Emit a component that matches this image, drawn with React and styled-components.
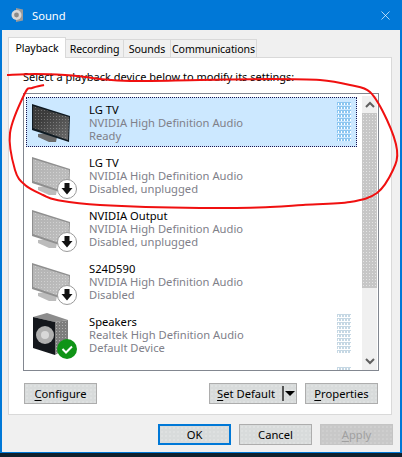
import styled, { createGlobalStyle } from "styled-components"
import { X } from "lucide-react"

const devices = [
  { id: 1, name: "LG TV", driver: "NVIDIA High Definition Audio", status: "Ready", icon: "tv", selected: true, meter: true },
  { id: 2, name: "LG TV", driver: "NVIDIA High Definition Audio", status: "Disabled, unplugged", icon: "off" },
  { id: 3, name: "NVIDIA Output", driver: "NVIDIA High Definition Audio", status: "Disabled, unplugged", icon: "off" },
  { id: 4, name: "S24D590", driver: "NVIDIA High Definition Audio", status: "Disabled", icon: "off" },
  { id: 5, name: "Speakers", driver: "Realtek High Definition Audio", status: "Default Device", icon: "speaker", meter: true },
]

// the hand drawn red line, point by point
const scribble = [
  [7, 75], [35, 74], [65, 75], [85, 77], [100, 79], [130, 81], [200, 80], [270, 79], [320, 80], [350, 85],
  [370, 92], [387, 120], [397, 150], [393, 170], [377, 193], [350, 202], [303, 205], [270, 207], [200, 208],
  [100, 205], [57, 200], [43, 195], [25, 185], [15, 170], [10, 133], [25, 93], [32, 88], [44, 85],
]

const smoothPath = (pts) => {
  let d = `M${pts[0][0]} ${pts[0][1]}`
  for (let i = 0; i < pts.length - 1; i++) {
    const p0 = pts[i - 1] || pts[i]
    const p1 = pts[i]
    const p2 = pts[i + 1]
    const p3 = pts[i + 2] || p2
    const c1 = [p1[0] + (p2[0] - p0[0]) / 6, p1[1] + (p2[1] - p0[1]) / 6]
    const c2 = [p2[0] - (p3[0] - p1[0]) / 6, p2[1] - (p3[1] - p1[1]) / 6]
    d += `C${c1[0]} ${c1[1]} ${c2[0]} ${c2[1]} ${p2[0]} ${p2[1]}`
  }
  return d
}

const GlobalStyle = createGlobalStyle`
  html, body {
    margin: 0;
    padding: 0;
    background: #10202c;
  }
  body {
    font-family: "Noto Sans", "Open Sans", sans-serif;
    font-size: 12px;
    color: #000;
    overflow: hidden;
  }
`

const Frame = styled.div`
  position: relative;
  width: 402px;
  height: 457px;
  overflow: hidden;
`

const Window = styled.div`
  width: 402px;
  height: 453px;
  box-sizing: border-box;
  background: #f0f0f0;
  border-left: 2px solid #0078d7;
  border-right: 2px solid #0078d7;
  border-bottom: 1px solid #0078d7;
  display: flex;
  flex-direction: column;
`

const TitleBar = styled.div`
  height: 30px;
  flex: none;
  background: #0078d7;
  color: #fff;
  display: flex;
  align-items: center;
  padding: 0 7px 0 9px;
  gap: 7px;
  svg.close {
    margin-left: auto;
  }
`

const Title = styled.span`
  font-size: 11.2px;
`

const Body = styled.div`
  flex: 1;
  display: flex;
  flex-direction: column;
  padding: 7px 8px 0 6px;
`

const Tabs = styled.div`
  display: flex;
  align-items: flex-end;
  height: 21px;
  position: relative;
  z-index: 1;
`

const Tab = styled.div`
  box-sizing: border-box;
  width: ${(p) => p.$width}px;
  height: ${(p) => (p.$active ? 21 : 19)}px;
  background: ${(p) => (p.$active ? "#fff" : "#f0f0f0")};
  border: 1px solid #d9d9d9;
  border-bottom: ${(p) => (p.$active ? "none" : "1px solid #d9d9d9")};
  border-left: ${(p) => (p.$active || p.$first ? "1px solid #d9d9d9" : "none")};
  display: flex;
  align-items: center;
  justify-content: center;
  font-size: 10.6px;
  letter-spacing: -0.1px;
  line-height: 16px;
  white-space: nowrap;
`

const Panel = styled.div`
  box-sizing: border-box;
  width: 384px;
  height: 358px;
  margin-top: -1px;
  background: #fff;
  border: 1px solid #d9d9d9;
  padding: 11px 12px 0 14px;
  display: flex;
  flex-direction: column;
`

const Hint = styled.div`
  height: 24px;
  line-height: 16px;
  font-size: 11px;
  white-space: nowrap;
`

const ListBox = styled.div`
  box-sizing: border-box;
  width: 356px;
  height: 278px;
  border: 1px solid #828790;
  display: flex;
  gap: 5px;
  padding: 2px 1px 0 2px;
  overflow: hidden;
`

const Rows = styled.div`
  width: 331px;
  flex: none;
  display: flex;
  flex-direction: column;
  gap: 3px;
  padding-top: 1px;
`

const Row = styled.div`
  box-sizing: border-box;
  flex: none;
  position: relative;
  height: 50px;
  display: flex;
  padding: 7px 6px 0 6px;
  background: ${(p) => (p.$selected ? "#cce8ff" : "transparent")};
  outline: ${(p) => (p.$selected ? "1px dotted #1c1450" : "none")};
  outline-offset: -1px;
`

const IconSlot = styled.div`
  width: 57px;
  flex: none;
  svg {
    display: block;
    overflow: visible;
  }
`

const Info = styled.div`
  flex: 1;
  display: flex;
  flex-direction: column;
  margin-top: -1px;
  font-size: 11.2px;
  line-height: 13px;
  white-space: nowrap;
`

const Name = styled.div`
  color: #000;
`

const Detail = styled.div`
  color: #808089;
`

const Meter = styled.div`
  width: 14px;
  height: 39px;
  flex: none;
  margin-top: -2px;
  background:
    radial-gradient(circle, #fff 0.5px, transparent 0.8px) 0 0 / 3px 4px,
    repeating-linear-gradient(
      to bottom,
      ${(p) => (p.$selected ? "#8cc6f0" : "#c6d8e4")} 0 3px,
      ${(p) => (p.$selected ? "#cce8ff" : "#fff")} 3px 4px
    );
`

const ScrollBar = styled.div`
  width: 15px;
  flex: none;
  height: 274px;
  display: flex;
  flex-direction: column;
  background: #f0f0f0;
`

const ScrollButton = styled.div`
  height: 17px;
  flex: none;
  display: flex;
  align-items: center;
  justify-content: center;
  color: #606060;
`

const Thumb = styled.div`
  height: 175px;
  background: radial-gradient(circle, #e4e4e4 0.5px, transparent 0.8px) 0 0 / 3px 3px, #c6c6c6;
`

const ScrollSpace = styled.div`
  flex: 1;
`

const ActionRow = styled.div`
  display: flex;
  align-items: center;
  margin-top: 12px;
  height: 21px;
  padding-left: 1px;
`

const Button = styled.button`
  box-sizing: border-box;
  width: ${(p) => p.$width || 73}px;
  height: 21px;
  flex: none;
  padding: 0;
  font-family: inherit;
  font-size: 11.2px;
  line-height: 16px;
  color: ${(p) => (p.$disabled ? "#a0a0a0" : "#000")};
  border: ${(p) => (p.$primary ? "2px solid #0078d7" : p.$disabled ? "1px solid #c4c4c4" : "1px solid #adadad")};
  background:
    radial-gradient(circle, ${(p) => (p.$disabled ? "#dcdcdc" : "#eceeee")} 0.5px, transparent 0.8px) 0 0 / 4px 4px,
    ${(p) => (p.$disabled ? "#c8c8c8" : "#d8dbdb")};
  display: flex;
  align-items: center;
  justify-content: center;
  u {
    text-underline-offset: 2px;
  }
`

const SplitLabel = styled.span`
  flex: 1;
`

const SplitArrow = styled.span`
  width: 14px;
  height: 15px;
  flex: none;
  box-sizing: border-box;
  border-left: 2px solid #555;
  display: flex;
  align-items: center;
  justify-content: center;
  &::after {
    content: "";
    border-left: 5px solid transparent;
    border-right: 5px solid transparent;
    border-top: 5px solid #000;
  }
`

const Spacer = styled.div`
  width: ${(p) => p.$width}px;
  flex: none;
`

const Footer = styled.div`
  display: flex;
  justify-content: flex-end;
  gap: 8px;
  margin-top: 9px;
  margin-right: -1px;
`

const Annotation = styled.svg`
  position: absolute;
  left: 0;
  top: 0;
  pointer-events: none;
`

const Dither = ({ id, dot, base }) => (
  <pattern id={id} width="3" height="3" patternUnits="userSpaceOnUse">
    <rect width="3" height="3" fill={base} />
    <rect width="1" height="1" fill={dot} />
  </pattern>
)

const Badge = ({ x, y }) => (
  <g>
    <circle cx={x} cy={y} r="9.5" fill="#fff" stroke="#9a9a9a" />
    <path d={`M${x - 2.5} ${y - 6}h5v5h3l-5.5 6.5-5.5-6.5h3z`} fill="#111" />
  </g>
)

const MonitorIcon = ({ active, id }) => (
  <svg width="48" height="44" viewBox="0 0 48 44">
    <defs>
      <Dither id={id} dot={active ? "#6e6e6e" : "#cfcfcf"} base={active ? "#3c3c3c" : "#b6b6b6"} />
      <linearGradient id={`${id}-shine`} x1="0" y1="0" x2="1" y2="1">
        <stop offset="0.3" stopColor="#fff" stopOpacity="0" />
        <stop offset="1" stopColor="#fff" stopOpacity={active ? 0.25 : 0.15} />
      </linearGradient>
    </defs>
    <polygon points="6,30 14,29 25,33 24,38 17,38 6,33" fill={active ? "#6c6c6c" : "#bcbcbc"} />
    <polygon points="0,0 38,12 37,38 0,26" fill={active ? "#0f1a22" : "#8f8f8f"} />
    <polygon points="1,2 37,13 36,36 1,24" fill={`url(#${id})`} />
    <polygon points="1,2 37,13 36,36 1,24" fill={`url(#${id}-shine)`} />
    {!active && <Badge x={35} y={32} />}
  </svg>
)

const SpeakerIcon = () => (
  <svg width="48" height="44" viewBox="0 0 48 44">
    <defs>
      <Dither id="spk" dot="#b0b0b0" base="#7d7d7d" />
    </defs>
    <polygon points="1,1 15,-3 36,4 23,6" fill="#8c8c8c" />
    <polygon points="23,6 36,4 36,31 23,39" fill="url(#spk)" />
    <polygon points="1,1 23,6 23,39 1,32" fill="#14171c" />
    <circle cx="13" cy="19" r="9" fill="#b0b0b0" />
    <circle cx="13" cy="19" r="4" fill="#d8d8d8" />
    <circle cx="35" cy="33" r="10" fill="#0f9416" />
    <path d="M30.5 33l3.5 3.5 6-6" fill="none" stroke="#fff" strokeWidth="2" />
  </svg>
)

const SoundGlyph = () => (
  <svg width="14" height="16" viewBox="0 0 14 16">
    <path d="M5 1l7 1.5v11L5 15z" fill="#9a9a9a" />
    <circle cx="5.5" cy="8" r="5" fill="#d8d8d8" />
    <circle cx="5.5" cy="8" r="2.4" fill="#8a8a8a" />
  </svg>
)

const DeviceRow = ({ device }) => (
  <Row $selected={device.selected}>
    <IconSlot>
      {device.icon === "speaker" ? (
        <SpeakerIcon />
      ) : (
        <MonitorIcon active={device.icon === "tv"} id={`mon-${device.id}`} />
      )}
    </IconSlot>
    <Info>
      <Name>{device.name}</Name>
      <Detail>{device.driver}</Detail>
      <Detail>{device.status}</Detail>
    </Info>
    {device.meter && <Meter $selected={device.selected} />}
  </Row>
)

export default function App() {
  return (
    <Frame>
      <GlobalStyle />
      <Window>
        <TitleBar>
          <SoundGlyph />
          <Title>Sound</Title>
          <X className="close" size={15} strokeWidth={1.1} />
        </TitleBar>
        <Body>
          <Tabs>
            <Tab $active $first $width={58}>Playback</Tab>
            <Tab $width={58}>Recording</Tab>
            <Tab $width={47}>Sounds</Tab>
            <Tab $width={86}>Communications</Tab>
          </Tabs>
          <Panel>
            <Hint>Select a playback device below to modify its settings:</Hint>
            <ListBox>
              <Rows>
                {devices.map((device) => (
                  <DeviceRow key={device.id} device={device} />
                ))}
                <Row>
                  <IconSlot>
                    <svg width="48" height="10" viewBox="0 0 48 10">
                      <path d="M8 5c3-4 14-4 18 0" fill="none" stroke="#111" strokeWidth="2" />
                    </svg>
                  </IconSlot>
                  <Info />
                  <Meter />
                </Row>
              </Rows>
              <ScrollBar>
                <ScrollButton>
                  <svg width="10" height="7" viewBox="0 0 10 7">
                    <path d="M1 6l4-4 4 4" fill="none" stroke="currentColor" strokeWidth="2" />
                  </svg>
                </ScrollButton>
                <Thumb />
                <ScrollSpace />
                <ScrollButton>
                  <svg width="10" height="7" viewBox="0 0 10 7">
                    <path d="M1 1l4 4 4-4" fill="none" stroke="currentColor" strokeWidth="2" />
                  </svg>
                </ScrollButton>
              </ScrollBar>
            </ListBox>
            <ActionRow>
              <Button><span><u>C</u>onfigure</span></Button>
              <Spacer $width={112} />
              <Button $width={88}>
                <SplitLabel><u>S</u>et Default</SplitLabel>
                <SplitArrow />
              </Button>
              <Spacer $width={8} />
              <Button><span><u>P</u>roperties</span></Button>
            </ActionRow>
          </Panel>
          <Footer>
            <Button $primary>OK</Button>
            <Button>Cancel</Button>
            <Button $disabled><span><u>A</u>pply</span></Button>
          </Footer>
        </Body>
      </Window>
      <Annotation width="402" height="457" viewBox="0 0 402 457">
        <path d={smoothPath(scribble)} fill="none" stroke="#f01010" strokeWidth="2" />
      </Annotation>
    </Frame>
  )
}
